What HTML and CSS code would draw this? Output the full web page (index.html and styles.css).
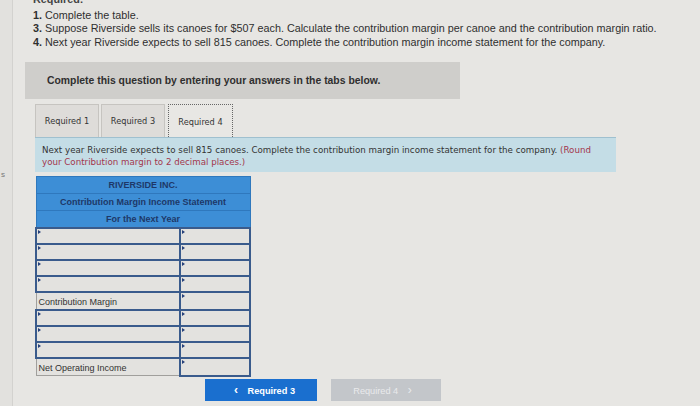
FILE: index.html
```html
<!DOCTYPE html>
<html lang="en">
<head>
  <meta charset="UTF-8">
  <title>Required 4</title>
  <link rel="stylesheet" href="styles.css">
</head>
<body>
  <div class="layout">
    <div class="side"><span class="side-mark">s</span></div>

    <div class="main">
      <div class="intro">
        <div class="req-title">Required:</div>
        <div><b>1.</b> Complete the table.</div>
        <div><b>3.</b> Suppose Riverside sells its canoes for $507 each. Calculate the contribution margin per canoe and the contribution margin ratio.</div>
        <div><b>4.</b> Next year Riverside expects to sell 815 canoes. Complete the contribution margin income statement for the company.</div>
      </div>

      <div class="notice">Complete this question by entering your answers in the tabs below.</div>

      <div class="work">
        <div class="tabs">
          <div class="tab">Required 1</div>
          <div class="tab">Required 3</div>
          <div class="tab active">Required 4</div>
        </div>

        <div class="instruction">
          Next year Riverside expects to sell 815 canoes. Complete the contribution margin income statement for the company. <span class="hint">(Round your Contribution margin to 2 decimal places.)</span>
        </div>

        <table class="statement">
          <tr><th colspan="2">RIVERSIDE INC.</th></tr>
          <tr><th colspan="2">Contribution Margin Income Statement</th></tr>
          <tr><th colspan="2">For the Next Year</th></tr>
          <tr><td class="input"></td><td class="input"></td></tr>
          <tr><td class="input"></td><td class="input"></td></tr>
          <tr><td class="input"></td><td class="input"></td></tr>
          <tr><td class="input"></td><td class="input"></td></tr>
          <tr><td class="label">Contribution Margin</td><td class="input"></td></tr>
          <tr><td class="input"></td><td class="input"></td></tr>
          <tr><td class="input"></td><td class="input"></td></tr>
          <tr><td class="input"></td><td class="input"></td></tr>
          <tr><td class="label">Net Operating Income</td><td class="input"></td></tr>
        </table>

        <div class="nav">
          <button class="nav-btn prev"><span class="chev">&lsaquo;</span> Required 3</button>
          <button class="nav-btn next">Required 4 <span class="chev">&rsaquo;</span></button>
        </div>
      </div>
    </div>
  </div>
</body>
</html>
```

FILE: styles.css
```css
:root {
  --page: #e7e6e3;
  --ink: #2f2f2f;
  --notice: #cfcecb;
  --tab: #dedcd9;
  --info: #c4dde6;
  --head: #3d8ed6;
  --head-ink: #1e3868;
  --cell: #e3e2df;
  --cell-line: #3a5b8c;
  --btn-blue: #1a6fcf;
  --btn-gray: #c3c6ca;
}
body {
  margin: 0;
  background: var(--page);
  color: var(--ink);
  font-family: 'Liberation Sans', Arial, sans-serif;
  overflow: hidden;
}
.layout {
  display: flex;
  min-height: 406px;
}
.side {
  width: 12px;
  border-right: 1px solid #d3d2cf;
  background: #e2e1de;
  position: relative;
}
.side-mark {
  position: absolute;
  top: 170px;
  left: 1px;
  font-size: 8px;
  color: #777;
}
.main {
  flex: 1;
  padding-left: 12px;
}

.intro {
  margin-left: 8px;
  font-size: 10.8px;
  line-height: 13.6px;
  margin-top: -7px;
}
.req-title {
  font-weight: bold;
  color: #444;
  margin-bottom: 2px;
}

.notice {
  margin-top: 13px;
  width: 413px;
  height: 37px;
  padding-left: 22px;
  background: var(--notice);
  font-size: 10.4px;
  font-weight: bold;
  display: flex;
  align-items: center;
}

.work {
  margin-left: 10px;
  margin-top: 5px;
}
.tabs {
  display: flex;
  gap: 2px;
}
.tab {
  box-sizing: border-box;
  width: 64px;
  height: 33px;
  background: var(--tab);
  border: 1px solid #c6c4c0;
  border-bottom: none;
  font-family: 'DejaVu Sans', Verdana, sans-serif;
  font-size: 8.2px;
  display: flex;
  align-items: center;
  justify-content: center;
  color: #333;
}
.tab.active {
  margin-left: 1px;
  width: 65px;
  background: #e8e7e4;
  border: 1px dotted #666;
  border-bottom: none;
  padding-top: 2px;
}

.instruction {
  width: 581px;
  height: 35px;
  box-sizing: border-box;
  padding: 7px 4px 0 7px;
  background: var(--info);
  border-top: 1px solid #9fc0cf;
  font-family: 'DejaVu Sans', Verdana, sans-serif;
  font-size: 8.7px;
  line-height: 11.5px;
  color: #333;
}
.hint {
  color: #a3364d;
}

.statement {
  margin-top: 4px;
  width: 216px;
  border-collapse: collapse;
  font-size: 9px;
}
.statement th {
  height: 16px;
  padding: 0;
  background: var(--head);
  color: var(--head-ink);
  border: 1px solid #2f78bd;
  font-weight: bold;
}
.statement td {
  height: 14px;
  padding: 0 2px;
  background: var(--cell);
}
.statement td:first-child {
  width: 138px;
}
.statement td.input {
  border: 2px solid var(--cell-line);
  position: relative;
}
.statement td.input::before {
  content: "";
  position: absolute;
  top: 1px;
  left: 1px;
  border-left: 3px solid #25407a;
  border-top: 2px solid transparent;
  border-bottom: 2px solid transparent;
}
.statement td.label {
  border: 1px solid #a09f9c;
  color: #333;
  padding-top: 2px;
}

.nav {
  margin-top: 2px;
  margin-left: 170px;
  display: flex;
  gap: 14px;
}
.nav-btn {
  width: 112px;
  height: 22px;
  border: none;
  font-family: 'Liberation Sans', Arial, sans-serif;
  font-size: 9.2px;
  font-weight: bold;
  padding: 0;
}
.nav-btn.prev {
  background: var(--btn-blue);
  color: #fff;
}
.nav-btn.next {
  width: 110px;
  background: var(--btn-gray);
  color: #e9eaec;
  font-weight: normal;
}
.chev {
  font-size: 12px;
  margin: 0 7px;
}
```
